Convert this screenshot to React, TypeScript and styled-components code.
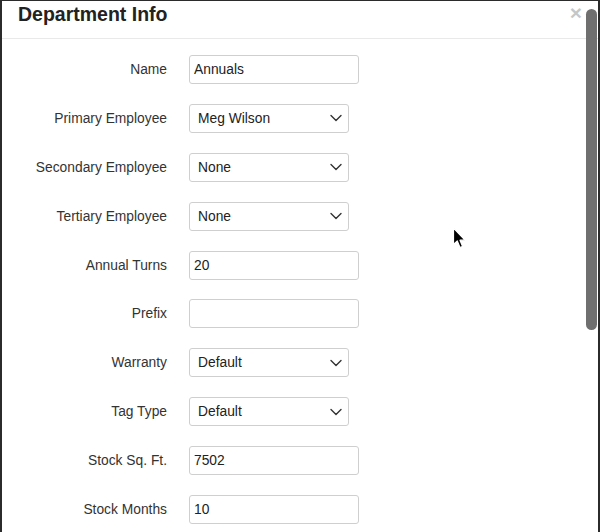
import React from "react";
import styled, { createGlobalStyle } from "styled-components";

const GlobalStyle = createGlobalStyle`
  html, body { margin: 0; padding: 0; background: #fff; }
  * { box-sizing: border-box; }
`;

const Frame = styled.div`
  position: relative;
  width: 600px;
  height: 532px;
  overflow: hidden;
  background: #fff;
  border-top: 1px solid #2b2b2b;
  border-left: 2px solid #2b2b2b;
  border-right: 2px solid #2b2b2b;
  font-family: "Liberation Sans", Arial, Helvetica, sans-serif;
  color: #333;
`;

const Header = styled.div`
  display: flex;
  align-items: flex-start;
  justify-content: space-between;
  height: 38px;
  padding: 2px 16px 0 16px;
  border-bottom: 1px solid #e9e9e9;
`;

const Title = styled.h4`
  margin: 0;
  font-size: 19.5px;
  line-height: 23px;
  font-weight: 700;
  color: #222;
`;

const Close = styled.button`
  border: 0;
  background: transparent;
  padding: 0;
  margin-top: -1px;
  font-family: "Liberation Sans", Arial, sans-serif;
  font-size: 21px;
  font-weight: 700;
  line-height: 1;
  color: #000;
  opacity: 0.22;
  cursor: pointer;
`;

const Body = styled.div`
  padding-top: 16px;
`;

const Form = styled.form`
  display: grid;
  grid-template-columns: 165px 1fr;
  grid-auto-rows: 29px;
  column-gap: 22px;
  row-gap: 19.9px;
`;

const Label = styled.label`
  align-self: center;
  text-align: right;
  font-size: 13.8px;
  color: #333;
  white-space: nowrap;
`;

const TextInput = styled.input`
  width: 170px;
  height: 29px;
  padding: 0 4px;
  border: 1px solid #cfcfcf;
  border-radius: 3px;
  background: #fff;
  font-family: "Liberation Sans", Arial, sans-serif;
  font-size: 13.8px;
  color: #222;
  outline: none;
`;

const SelectBox = styled.div`
  position: relative;
  display: flex;
  align-items: center;
  justify-content: space-between;
  width: 160px;
  height: 29px;
  padding: 0 5px 0 8px;
  border: 1px solid #cfcfcf;
  border-radius: 3px;
  background: #fff;
  font-size: 13.8px;
  color: #222;
`;

const Chevron = styled.svg`
  width: 12px;
  height: 8px;
  margin-right: 1px;
`;

const ScrollThumb = styled.div`
  position: absolute;
  top: 8px;
  right: 1px;
  width: 11px;
  height: 321px;
  border-radius: 6px;
  background: #6f6f6f;
`;

const Pointer = styled.svg`
  position: absolute;
  left: 450px;
  top: 226px;
  width: 14px;
  height: 22px;
`;

type Field =
  | { label: string; kind: "text"; value: string }
  | { label: string; kind: "select"; value: string };

const fields: Field[] = [
  { label: "Name", kind: "text", value: "Annuals" },
  { label: "Primary Employee", kind: "select", value: "Meg Wilson" },
  { label: "Secondary Employee", kind: "select", value: "None" },
  { label: "Tertiary Employee", kind: "select", value: "None" },
  { label: "Annual Turns", kind: "text", value: "20" },
  { label: "Prefix", kind: "text", value: "" },
  { label: "Warranty", kind: "select", value: "Default" },
  { label: "Tag Type", kind: "select", value: "Default" },
  { label: "Stock Sq. Ft.", kind: "text", value: "7502" },
  { label: "Stock Months", kind: "text", value: "10" },
];

export default function App() {
  return (
    <>
      <GlobalStyle />
      <Frame>
        <Header>
          <Title>Department Info</Title>
          <Close type="button" aria-label="Close">×</Close>
        </Header>
        <Body>
          <Form onSubmit={(e) => e.preventDefault()}>
            {fields.map((f) => (
              <React.Fragment key={f.label}>
                <Label>{f.label}</Label>
                {f.kind === "text" ? (
                  <TextInput defaultValue={f.value} />
                ) : (
                  <SelectBox>
                    <span>{f.value}</span>
                    <Chevron viewBox="0 0 12 8">
                      <path d="M1 1.5 L6 6.5 L11 1.5" fill="none" stroke="#333" strokeWidth="1.4" strokeLinecap="round" strokeLinejoin="round" />
                    </Chevron>
                  </SelectBox>
                )}
              </React.Fragment>
            ))}
          </Form>
        </Body>
        <ScrollThumb />
        <Pointer viewBox="0 0 14 22">
          <path d="M1.5 1 V17.5 L5.3 14 L8 20.5 L10.6 19.4 L8 13.2 H13 Z" fill="#000" stroke="#fff" strokeWidth="1.2" strokeLinejoin="round" />
        </Pointer>
      </Frame>
    </>
  );
}
